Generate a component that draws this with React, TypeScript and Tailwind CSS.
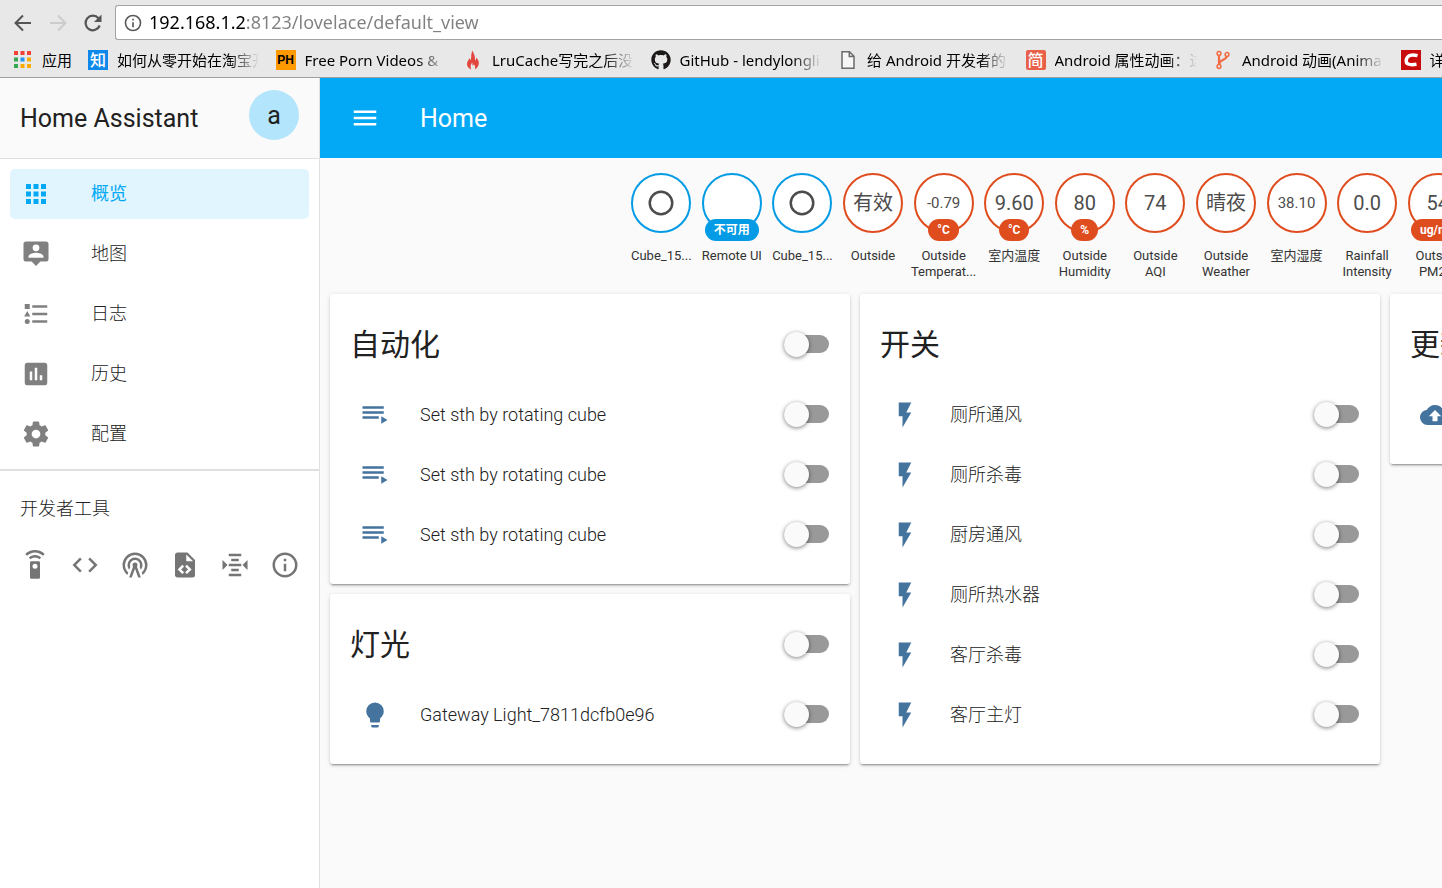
import React from "react";
import { FaGithub } from "react-icons/fa";

const ICONS = {
  apps: "M16,20H20V16H16M16,14H20V10H16M10,8H14V4H10M16,8H20V4H16M10,14H14V10H10M4,14H8V10H4M4,20H8V16H4M10,20H14V16H10M4,8H8V4H4V8Z",
  map: "M4,2H20A2,2 0 0,1 22,4V16A2,2 0 0,1 20,18H15.5L12,21.5L8.5,18H4A2,2 0 0,1 2,16V4A2,2 0 0,1 4,2M12,4.3A2.7,2.7 0 0,0 9.3,7A2.7,2.7 0 0,0 12,9.7A2.7,2.7 0 0,0 14.7,7A2.7,2.7 0 0,0 12,4.3M18,15V14.1C18,12.1 14,11 12,11C10,11 6,12.1 6,14.1V15H18Z",
  log: "M5,9.5L7.5,14H2.5L5,9.5M3,4H7V8H3V4M5,20A2,2 0 0,0 7,18A2,2 0 0,0 5,16A2,2 0 0,0 3,18A2,2 0 0,0 5,20M9,5V7H21V5H9M9,19H21V17H9V19M9,13H21V11H9V13Z",
  history:
    "M17,17H15V13H17M13,17H11V7H13M9,17H7V10H9M19,3H5C3.89,3 3,3.89 3,5V19A2,2 0 0,0 5,21H19A2,2 0 0,0 21,19V5C21,3.89 20.1,3 19,3Z",
  cog: "M12,15.5A3.5,3.5 0 0,1 8.5,12A3.5,3.5 0 0,1 12,8.5A3.5,3.5 0 0,1 15.5,12A3.5,3.5 0 0,1 12,15.5M19.43,12.97C19.47,12.65 19.5,12.33 19.5,12C19.5,11.67 19.47,11.34 19.43,11L21.54,9.37C21.73,9.22 21.78,8.95 21.66,8.73L19.66,5.27C19.54,5.05 19.27,4.96 19.05,5.05L16.56,6.05C16.04,5.66 15.5,5.32 14.87,5.07L14.5,2.42C14.46,2.18 14.25,2 14,2H10C9.75,2 9.54,2.18 9.5,2.42L9.13,5.07C8.5,5.32 7.96,5.66 7.44,6.05L4.95,5.05C4.73,4.96 4.46,5.05 4.34,5.27L2.34,8.73C2.21,8.95 2.27,9.22 2.46,9.37L4.57,11C4.53,11.34 4.5,11.67 4.5,12C4.5,12.33 4.53,12.65 4.57,12.97L2.46,14.63C2.27,14.78 2.21,15.05 2.34,15.27L4.34,18.73C4.46,18.95 4.73,19.03 4.95,18.95L7.44,17.94C7.96,18.34 8.5,18.68 9.13,18.93L9.5,21.58C9.54,21.82 9.75,22 10,22H14C14.25,22 14.46,21.82 14.5,21.58L14.87,18.93C15.5,18.67 16.04,18.34 16.56,17.94L19.05,18.95C19.27,19.03 19.54,18.95 19.66,18.73L21.66,15.27C21.78,15.05 21.73,14.78 21.54,14.63L19.43,12.97Z",
  remote:
    "M12,0C8.96,0 6.21,1.23 4.22,3.22L5.63,4.63C7.26,3 9.5,2 12,2C14.5,2 16.74,3 18.36,4.64L19.77,3.23C17.79,1.23 15.04,0 12,0M7.05,6.05L8.46,7.46C9.37,6.56 10.62,6 12,6C13.38,6 14.63,6.56 15.54,7.46L16.95,6.05C15.68,4.78 13.93,4 12,4C10.07,4 8.32,4.78 7.05,6.05M12,15A2,2 0 0,1 10,13A2,2 0 0,1 12,11A2,2 0 0,1 14,13A2,2 0 0,1 12,15M15,9H9A1,1 0 0,0 8,10V22A1,1 0 0,0 9,23H15A1,1 0 0,0 16,22V10A1,1 0 0,0 15,9Z",
  code: "M14.6,16.6L19.2,12L14.6,7.4L16,6L22,12L16,18L14.6,16.6M9.4,16.6L4.8,12L9.4,7.4L8,6L2,12L8,18L9.4,16.6Z",
  tower:
    "M12,10A2,2 0 0,1 14,12C14,12.5 13.82,12.94 13.53,13.29L16.7,22H14.57L12,14.93L9.43,22H7.3L10.47,13.29C10.18,12.94 10,12.5 10,12A2,2 0 0,1 12,10M12,8A4,4 0 0,0 8,12C8,12.5 8.1,13 8.28,13.46L7.4,15.86C6.53,14.81 6,13.47 6,12A6,6 0 0,1 12,6A6,6 0 0,1 18,12C18,13.47 17.47,14.81 16.6,15.86L15.72,13.46C15.9,13 16,12.5 16,12A4,4 0 0,0 12,8M12,4A8,8 0 0,0 4,12C4,14.36 5,16.5 6.64,17.94L5.92,19.94C3.54,18.11 2,15.23 2,12A10,10 0 0,1 12,2A10,10 0 0,1 22,12C22,15.23 20.46,18.11 18.08,19.94L17.36,17.94C19,16.5 20,14.36 20,12A8,8 0 0,0 12,4Z",
  template:
    "M13,9H18.5L13,3.5V9M6,2H14L20,8V20A2,2 0 0,1 18,22H6C4.89,22 4,21.1 4,20V4C4,2.89 4.89,2 6,2M6.12,15.5L9.86,19.24L11.28,17.83L8.95,15.5L11.28,13.17L9.86,11.76L6.12,15.5M17.28,15.5L13.54,11.76L12.12,13.17L14.45,15.5L12.12,17.83L13.54,19.24L17.28,15.5Z",
  altimeter:
    "M7,3V5H17V3H7M9,7V9H15V7H9M2,7.96V16.04L6.03,12L2,7.96M22.03,7.96L18,12L22.03,16.04V7.96M7,11V13H17V11H7M9,15V17H15V15H9M7,19V21H17V19H7Z",
  info: "M11,9H13V7H11M12,20C7.59,20 4,16.41 4,12C4,7.59 7.59,4 12,4C16.41,4 20,7.59 20,12C20,16.41 16.41,20 12,20M12,2A10,10 0 0,0 2,12A10,10 0 0,0 12,22A10,10 0 0,0 22,12A10,10 0 0,0 12,2M11,17H13V11H11V17Z",
  playlist: "M19,9H2V11H19V9M19,5H2V7H19V5M2,15H15V13H2V15M17,13V19L22,16L17,13Z",
  menu: "M3,6H21V8H3V6M3,11H21V13H3V11M3,16H21V18H3V16Z",
  flash: "M7,2V13H10V22L17,10H13L17,2H7Z",
  bulb: "M12,2A7,7 0 0,0 5,9C5,11.38 6.19,13.47 8,14.74V17A1,1 0 0,0 9,18H15A1,1 0 0,0 16,17V14.74C17.81,13.47 19,11.38 19,9A7,7 0 0,0 12,2M9,21A1,1 0 0,0 10,22H14A1,1 0 0,0 15,21V20H9V21Z",
  upload:
    "M14,13V17H10V13H7L12,8L17,13M19.35,10.03C18.67,6.59 15.64,4 12,4C9.11,4 6.6,5.64 5.35,8.03C2.34,8.36 0,10.9 0,14A6,6 0 0,0 6,20H19A5,5 0 0,0 24,15C24,12.36 21.95,10.22 19.35,10.03Z",
  circle:
    "M12,20A8,8 0 0,1 4,12A8,8 0 0,1 12,4A8,8 0 0,1 20,12A8,8 0 0,1 12,20M12,2A10,10 0 0,0 2,12A10,10 0 0,0 12,22A10,10 0 0,0 22,12A10,10 0 0,0 12,2Z",
};
type IconName = keyof typeof ICONS;

function Icon({ name, className = "" }: { name: IconName; className?: string }) {
  return (
    <svg viewBox="0 0 24 24" className={`size-[30px] shrink-0 ${className}`} fill="currentColor" aria-hidden="true">
      <path d={ICONS[name]} />
    </svg>
  );
}

/* ---------- browser chrome ---------- */

const APP_DOTS = ["#f44336", "#f44336", "#f44336", "#34a853", "#2196f3", "#fbab05", "#34a853", "#fbab05", "#fbab05"];

const bookmarks: { title: string; icon: React.ReactNode }[] = [
  {
    title: "如何从零开始在淘宝开",
    icon: <span className="flex size-5 items-center justify-center bg-[#0f88eb] text-base leading-5 font-medium text-white">知</span>,
  },
  {
    title: "Free Porn Videos &",
    icon: (
      <span className="flex size-5 items-center justify-center bg-[#ff9900] font-['Liberation_Sans'] text-xs leading-5 font-bold text-black">
        PH
      </span>
    ),
  },
  {
    title: "LruCache写完之后没",
    icon: (
      <svg viewBox="0 0 20 20" className="size-5" aria-hidden="true">
        <path
          fill="#e2473f"
          d="M9.600 0.500C10 3 12.300 5.300 12 8.500C12 9.500 11.800 10.200 12.300 10.200C13 10 13.200 8.800 13.200 7.500C15 9.300 16.200 11.500 15.800 14C15.400 16.500 13.800 18.300 11.800 19.500C12.500 17.500 12.200 16 10.800 14.200C10.600 15.200 10 15.600 9.500 15.500C9.200 14.500 9.400 13.400 9.400 12.500C7.800 14 7 16.500 8.200 19.500C5.500 18.500 4 16.500 4 14C4.100 11 6 9.800 6.600 8C7 9.200 7 10 7.500 10C8.800 8 7.500 4 9.600 0.500Z"
        />
      </svg>
    ),
  },
  { title: "GitHub - lendylongli", icon: <FaGithub className="size-5 text-[#1b1817]" /> },
  {
    title: "给 Android 开发者的",
    icon: (
      <svg viewBox="0 0 20 20" className="size-5" aria-hidden="true">
        <path d="M4 1.800H11.500L16 6.300V18.200H4ZM11.300 2V6.500H16" fill="#f6f6f6" stroke="#6b6b6b" strokeWidth="1.500" />
      </svg>
    ),
  },
  {
    title: "Android 属性动画：这",
    icon: (
      <span className="flex size-5 items-center justify-center rounded-xs bg-[#e8604a] text-base leading-5 font-medium text-white">
        简
      </span>
    ),
  },
  {
    title: "Android 动画(Anima",
    icon: (
      <svg viewBox="0 0 20 20" className="size-5" fill="none" stroke="#f26b43" strokeWidth="1.500" aria-hidden="true">
        <circle cx="6" cy="3.500" r="1.900" />
        <circle cx="14" cy="4.500" r="1.900" />
        <circle cx="6" cy="16.500" r="1.900" />
        <path d="M6 5.400V14.600M13.700 6.400C13.300 10.500 6.800 9 6.200 14" strokeWidth="2.200" />
      </svg>
    ),
  },
  {
    title: "详解",
    icon: (
      <svg viewBox="0 0 20 20" className="size-5" aria-hidden="true">
        <path fill="#c90a0a" d="M0 0H20V20H0Z" />
        <path
          d="M16.500 5.700C11 4.200 6.500 5 5.300 9.500C4.300 14 8 15.500 15.500 14.300"
          fill="none"
          stroke="#fff"
          strokeWidth="3.400"
        />
      </svg>
    ),
  },
];

function BrowserChrome() {
  return (
    <header className="overflow-hidden border-b border-[#a0a0a0] bg-[#e8e8e8] font-['Noto_Sans','Noto_Sans_CJK_SC',sans-serif] text-black">
      <div className="flex items-center pt-[5px] pl-[13px]">
        <button aria-label="Back" className="mr-[15px] text-[#555]">
          <svg viewBox="0 0 20 20" className="size-5" fill="none" stroke="currentColor" strokeWidth="2">
            <path d="M18 10H3M10 2.500L2.500 10L10 17.500" />
          </svg>
        </button>
        <button aria-label="Forward" className="mr-[15px] text-[#ccc]">
          <svg viewBox="0 0 20 20" className="size-5" fill="none" stroke="currentColor" strokeWidth="2">
            <path d="M2 10H17M10 2.500L17.500 10L10 17.500" />
          </svg>
        </button>
        <button aria-label="Reload" className="mr-3 text-[#555]">
          <svg viewBox="0 0 20 20" className="size-5" fill="none" stroke="currentColor" strokeWidth="2.200">
            <path d="M16.700 12.500A7.300 7.300 0 1 1 15.500 5.300" />
            <path d="M18.500 1.500V9H11Z" fill="currentColor" stroke="none" />
          </svg>
        </button>
        <div className="flex h-[35px] flex-1 items-center gap-1.5 rounded-l-[3px] border border-r-0 border-[#a3a3a3] bg-white pl-[7px]">
          <Icon name="info" className="size-[20px]! text-[#5a5a5a]" />
          <input
            aria-label="Address"
            defaultValue="192.168.1.2:8123/lovelace/default_view"
            className="h-8 min-w-0 flex-1 bg-[linear-gradient(to_right,#000_96px,#808080_96px)] bg-clip-text pb-0.5 text-lg text-transparent outline-none"
          />
        </div>
      </div>
      <nav aria-label="Bookmarks" className="flex h-[37px] items-center pt-0.5 pl-[14px] text-[15px] leading-5">
        <a href="#apps" className="flex w-[74px] shrink-0 items-center gap-[11px] whitespace-nowrap">
          <svg viewBox="0 0 17 17" className="size-[17px]" aria-hidden="true">
            {APP_DOTS.map((c, i) => (
              <rect key={i} x={(i % 3) * 6.5} y={Math.floor(i / 3) * 6.5} width="4" height="4" fill={c} />
            ))}
          </svg>
          应用
        </a>
        <div className="grid w-[1500px] shrink-0 grid-cols-8">
          {bookmarks.map((b) => (
            <a key={b.title} href="#bookmark" className="flex items-center gap-[9px]">
              <span className="shrink-0">{b.icon}</span>
              <span className="w-[142px] overflow-hidden mask-r-from-[112px] mask-r-to-[142px] whitespace-nowrap">{b.title}</span>
            </a>
          ))}
        </div>
      </nav>
    </header>
  );
}

/* ---------- sidebar ---------- */

const navItems: { icon: IconName; label: string }[] = [
  { icon: "apps", label: "概览" },
  { icon: "map", label: "地图" },
  { icon: "log", label: "日志" },
  { icon: "history", label: "历史" },
  { icon: "cog", label: "配置" },
];

const devTools: { icon: IconName; label: string }[] = [
  { icon: "remote", label: "Services" },
  { icon: "code", label: "States" },
  { icon: "tower", label: "Events" },
  { icon: "template", label: "Templates" },
  { icon: "altimeter", label: "MQTT" },
  { icon: "info", label: "Info" },
];

function Sidebar() {
  return (
    <aside className="w-80 shrink-0 border-r border-[#e0e0e0] bg-white">
      <div className="flex h-[81px] items-center justify-between border-b border-[#e0e0e0] bg-[#fafafa] pr-5 pl-5">
        <h1 className="pt-0.5 text-[25px] leading-8">Home Assistant</h1>
        <a
          href="#profile"
          className="mb-1.5 flex size-[50px] items-center justify-center rounded-full bg-[#b3e5fc] pt-0.5 text-[25px] leading-8"
        >
          a
        </a>
      </div>
      <nav className="flex flex-col gap-2.5 border-b-2 border-[#e0e0e0] p-2.5">
        {navItems.map((item, i) => (
          <a
            key={item.label}
            href={`#${item.icon}`}
            className={
              "flex h-[50px] items-center gap-10 rounded-[5px] px-[11px] text-lg " +
              (i === 0 ? "bg-[#e1f5fe] text-[#03a9f4]" : "font-light")
            }
          >
            <Icon name={item.icon} className={i === 0 ? "" : "text-[#808080]"} />
            {item.label}
          </a>
        ))}
      </nav>
      <h2 className="px-5 pt-6 text-lg font-light">开发者工具</h2>
      <div className="flex pt-[17px] pl-2.5">
        {devTools.map((t) => (
          <a key={t.label} href="#dev" aria-label={t.label} className="flex size-[50px] shrink-0 items-center justify-center text-[#757575]">
            <Icon name={t.icon} />
          </a>
        ))}
      </div>
    </aside>
  );
}

/* ---------- badges ---------- */

interface Badge {
  value?: string;
  icon?: IconName;
  unit?: string;
  lines: string[];
  blue?: boolean;
}

const badges: Badge[] = [
  { icon: "circle", lines: ["Cube_15..."], blue: true },
  { unit: "不可用", lines: ["Remote UI"], blue: true },
  { icon: "circle", lines: ["Cube_15..."], blue: true },
  { value: "有效", lines: ["Outside"] },
  { value: "-0.79", unit: "°C", lines: ["Outside", "Temperat..."] },
  { value: "9.60", unit: "°C", lines: ["室内温度"] },
  { value: "80", unit: "%", lines: ["Outside", "Humidity"] },
  { value: "74", lines: ["Outside", "AQI"] },
  { value: "晴夜", lines: ["Outside", "Weather"] },
  { value: "38.10", lines: ["室内湿度"] },
  { value: "0.0", lines: ["Rainfall", "Intensity"] },
  { value: "54", unit: "ug/m3", lines: ["Outside", "PM2.5"] },
];

function BadgeView({ badge }: { badge: Badge }) {
  const long = (badge.value ?? "").length > 4;
  return (
    <div className="flex flex-col items-center">
      <div
        className={
          "relative flex size-[60px] items-center justify-center rounded-full border-2 bg-white text-[#4c4c4c] " +
          (badge.blue ? "border-[#039be5] " : "border-[#df4c1e] ") +
          (long ? "text-[15px]" : "text-xl")
        }
      >
        {badge.icon ? <Icon name={badge.icon} /> : badge.value}
        {badge.unit && (
          <span
            className={
              "absolute top-11 rounded-full px-[9px] text-xs leading-[22px] font-bold whitespace-nowrap text-white " +
              (badge.blue ? "bg-[#039be5]" : "bg-[#df4c1e]")
            }
          >
            {badge.unit}
          </span>
        )}
      </div>
      <p className="mt-[15px] text-center text-[13px] leading-4 whitespace-nowrap text-[#333]">
        {badge.lines.map((line) => (
          <span key={line} className="block">
            {line}
          </span>
        ))}
      </p>
    </div>
  );
}

/* ---------- cards ---------- */

function Toggle({ label }: { label: string }) {
  return (
    <input
      type="checkbox"
      role="switch"
      aria-label={label}
      className="relative mr-px mb-0.5 h-[18px] w-[45px] shrink-0 appearance-none rounded-full bg-[#999] before:absolute before:top-[-3px] before:left-0 before:size-[25px] before:rounded-full before:bg-[#fafafa] before:shadow-[0_1px_4px_rgba(0,0,0,0.5)]"
    />
  );
}

interface CardProps {
  title: string;
  icon: IconName;
  rows: string[];
  master?: boolean;
}

function Card({ title, icon, rows, master }: CardProps) {
  return (
    <section className="rounded-[3px] bg-white px-5 pt-[11px] pb-[19px] shadow-[0_2px_2px_rgba(0,0,0,0.14),0_1px_5px_rgba(0,0,0,0.12),0_3px_1px_-2px_rgba(0,0,0,0.2)]">
      <div className="flex h-20 items-center justify-between">
        <h2 className="text-3xl leading-10">{title}</h2>
        {master && <Toggle label={title} />}
      </div>
      <ul>
        {rows.map((row, i) => (
          <li key={i} className="flex h-[60px] items-center">
            <Icon name={icon} className="mx-2.5 text-[#44739e]" />
            <span className="flex-1 pl-5 text-lg font-light">{row}</span>
            {row && <Toggle label={row} />}
          </li>
        ))}
      </ul>
    </section>
  );
}

const cardColumns: CardProps[][] = [
  [
    {
      title: "自动化",
      icon: "playlist",
      master: true,
      rows: ["Set sth by rotating cube", "Set sth by rotating cube", "Set sth by rotating cube"],
    },
    { title: "灯光", icon: "bulb", master: true, rows: ["Gateway Light_7811dcfb0e96"] },
  ],
  [{ title: "开关", icon: "flash", rows: ["厕所通风", "厕所杀毒", "厨房通风", "厕所热水器", "客厅杀毒", "客厅主灯"] }],
  [{ title: "更新", icon: "upload", rows: [""] }],
];

export default function App() {
  return (
    <div className="flex min-h-screen flex-col overflow-hidden">
      <BrowserChrome />
      <div className="flex flex-1 font-[Roboto,'Noto_Sans_CJK_SC',sans-serif] text-[#212121]">
        <Sidebar />
        <main className="min-w-0 flex-1 overflow-hidden bg-[#fafafa]">
          <div className="flex h-20 items-center gap-10 bg-[#03a9f4] pl-[30px] text-white">
            <button aria-label="Menu">
              <Icon name="menu" />
            </button>
            <h1 className="pt-0.5 text-[25px] leading-8">Home</h1>
          </div>
          <div className="pt-[15px] pl-[306px]">
            <div className="grid h-[121px] w-[847px] grid-cols-12">
              {badges.map((b, i) => (
                <BadgeView key={i} badge={b} />
              ))}
            </div>
          </div>
          <div className="flex items-start gap-2.5 px-2.5 pb-5">
            {cardColumns.map((cards, i) => (
              <div key={i} className="flex w-[520px] shrink-0 flex-col gap-2.5">
                {cards.map((c) => (
                  <Card key={c.title} {...c} />
                ))}
              </div>
            ))}
          </div>
        </main>
      </div>
    </div>
  );
}
